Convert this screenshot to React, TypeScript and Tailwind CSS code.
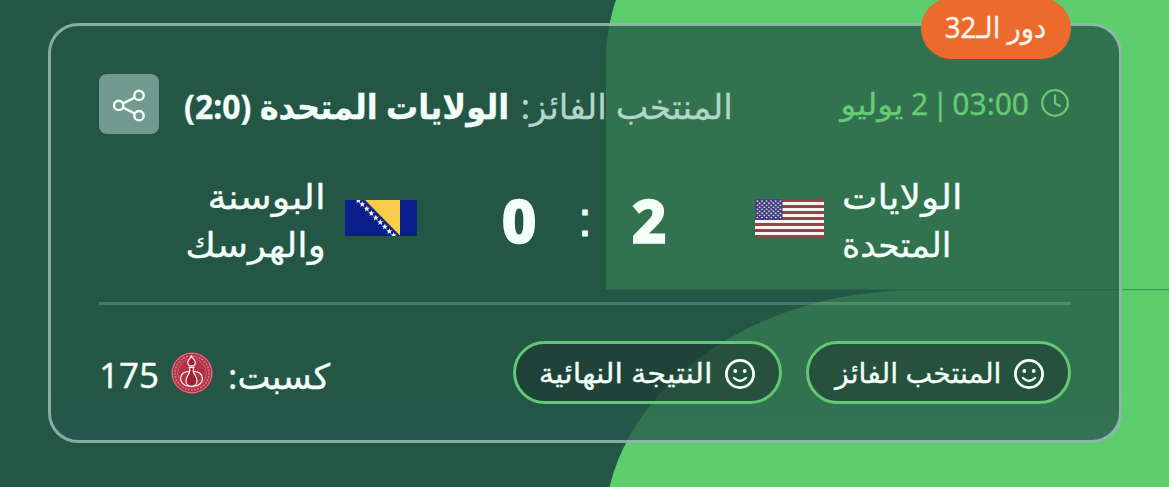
import type { ReactNode } from "react";

function Backdrop() {
  return (
    <svg className="absolute inset-0" width="1169" height="487" viewBox="0 0 1169 487" fill="none">
      <path d="M606 289.5V60A312 240 0 0 1 918 -180H1169V289.5Z" fill="#5ecd6d" />
      <path d="M604.5 530A313 240 0 0 1 917.500 290H1169V530Z" fill="#5ecd6d" />
      <path d="M606 289.7H1169" stroke="#3f9a5c" strokeWidth="1" />
    </svg>
  );
}

function ShareIcon() {
  return (
    <svg width="60" height="60" viewBox="0 0 60 60" fill="none" stroke="#f4fffa" strokeWidth="2.4">
      <circle cx="19.7" cy="31.4" r="4.7" />
      <circle cx="40" cy="21.4" r="4.7" />
      <circle cx="40" cy="41.7" r="4.7" />
      <path d="M24 29.4L35.7 23.6M24 33.5L35.8 39.6" />
    </svg>
  );
}

function ClockIcon() {
  return (
    <svg width="30" height="30" viewBox="0 0 30 30" fill="none" stroke="#67cb74" strokeWidth="2.3" strokeLinecap="round" strokeLinejoin="round">
      <circle cx="15" cy="15" r="12.8" />
      <path d="M15 7.5V15.5L20 18" />
    </svg>
  );
}

function SmileIcon() {
  return (
    <svg className="shrink-0" width="32" height="32" viewBox="0 0 32 32" fill="none" stroke="#f4fffa" strokeWidth="2.8" strokeLinecap="round">
      <circle cx="16" cy="16" r="13.6" />
      <path d="M10 20Q16 25.8 22 20" strokeWidth="2.4" />
      <circle cx="11.3" cy="13" r="1.9" fill="#f4fffa" stroke="none" />
      <circle cx="20.7" cy="13" r="1.9" fill="#f4fffa" stroke="none" />
    </svg>
  );
}

const flagStars = [
  [13.4, 0.5], [17.3, 4.3], [21.8, 8.8], [26.3, 13.3], [30.8, 17.8], [35.3, 22.3], [39.8, 26.8], [44.3, 31.3], [48.7, 35.4],
];

function BosniaFlag() {
  return (
    <svg className="shrink-0" width="72" height="36" viewBox="0 0 72 36">
      <rect width="72" height="36" fill="#0a1f8c" />
      <path d="M19.500 0H55V36Z" fill="#f5cd4b" />
      <path d="M19 0L54.500 36" stroke="#33305f" strokeWidth="1.4" />
      {flagStars.map(([x, y]) => (
        <path
          key={x}
          transform={`translate(${x} ${y}) scale(1.1)`}
          d="M0 -2.9L.75 -.95L2.8 -.9L1.2 .4L1.7 2.4L0 1.25L-1.7 2.4L-1.2 .4L-2.8 -.9L-.75 -.95Z"
          fill="#f2f6ff"
        />
      ))}
    </svg>
  );
}

function UsaFlag() {
  const stars: [number, number][] = [];
  for (let r = 0; r < 9; r++) {
    for (let c = 0; c < (r % 2 ? 5 : 6); c++) {
      stars.push([2.4 + c * 4.6 + (r % 2 ? 2.3 : 0), 2.1 + r * 2.05]);
    }
  }
  return (
    <svg className="shrink-0" width="69" height="39" viewBox="0 0 69 39">
      <rect width="69" height="39" fill="#96404a" />
      {[3, 9, 15, 21, 27, 33].map((y) => (
        <rect key={y} y={y} width="69" height="3" fill="#fbf3f3" />
      ))}
      <rect width="27.5" height="21" fill="#46427f" />
      {stars.map(([x, y]) => (
        <circle key={`${x}-${y}`} cx={x} cy={y} r="0.8" fill="#f1eef9" />
      ))}
    </svg>
  );
}

function Coin() {
  return (
    <svg className="shrink-0" width="42" height="42" viewBox="0 0 42 42" fill="none">
      <circle cx="21" cy="21" r="20.8" fill="#b23346" />
      <circle cx="21" cy="21" r="19.8" stroke="#d98f98" strokeWidth="0.9" />
      <circle cx="21" cy="21" r="17" stroke="#d07884" strokeWidth="1.5" strokeDasharray="2 1.2" />
      <circle cx="21" cy="21" r="14.4" stroke="#cb6d7a" strokeWidth="0.8" />
      <g stroke="#fff1f1" strokeWidth="1.2">
        <path d="M18.500 19.500C6.500 19 7 33.500 17.500 34H23.500C34 33.500 34.500 19 22.500 19.500" fill="#b23346" />
        <path d="M18.700 15.500H22.300V19.500C23.500 23.500 26 25 26 28.800C26 32 23.700 34.300 20.500 34.300C17.300 34.300 15 32 15 28.800C15 25 17.500 23.500 18.700 19.500Z" fill="#a71d33" />
        <path d="M20.500 4.200C21.500 6.700 24.300 7.700 24.300 10.400C24.300 12.600 22.500 13.900 20.500 13.900C18.500 13.900 16.700 12.600 16.700 10.400C16.700 7.700 19.500 6.700 20.500 4.200Z" fill="#a71d33" />
        <path d="M17.500 15.200H23.500" />
      </g>
    </svg>
  );
}

function Prediction({ className, children }: { className: string; children: ReactNode }) {
  return (
    <div className={`flex h-[63px] items-center rounded-full border-3 border-[#62c873] bg-[#1a2f2b]/50 pr-[23px] ${className}`}>
      <div className="pt-0.5"><SmileIcon /></div>
      {children}
    </div>
  );
}

export default function App() {
  return (
    <div
      dir="rtl"
      className="relative h-[487px] w-[1169px] overflow-hidden bg-[#245645] pt-[23px] pr-[47px] font-['Noto_Sans','DejaVu_Sans',sans-serif] text-[#f4fffa] [-webkit-text-stroke:0.3px]"
    >
      <Backdrop />
      <div className="relative h-[420px] w-[1074px] rounded-[30px] border-3 border-[#c7e7dc]/60 bg-linear-to-b from-[#245645]/77 from-88% to-[#265650]/77 px-12 pt-12">
        <div className="absolute -top-7 right-12 flex h-[61px] w-[150px] items-center justify-center rounded-full bg-[#eb6a2c] pb-1 text-[29px] text-[#fff6ea]">
          <span className="scale-x-95 whitespace-nowrap">دور الـ32</span>
        </div>

        {/* Kick-off time, winner and share button */}
        <div className="flex h-[60px] items-center">
          <div className="flex w-[338px] items-center text-[30px] leading-none text-[#67cb74]">
            <div className="mr-px pb-0.5"><ClockIcon /></div>
            <span className="mr-[11px] whitespace-nowrap [word-spacing:-4px]">
              03:00 | 2 <span className="mr-1 inline-block origin-right scale-x-110">يوليو</span>
            </span>
          </div>
          <div className="w-[550px] pt-1 text-[34px] leading-none whitespace-nowrap text-[#b3d6c9]">
            <span className="inline-block origin-right scale-x-[1.015]">المنتخب الفائز:</span>{" "}
            <b className="mr-1.5 inline-block origin-right scale-x-[0.942] text-[#f4fffa]">الولايات المتحدة (2:0)</b>
          </div>
          <button type="button" className="mr-auto size-[60px] rounded-lg bg-[#739a8f]" aria-label="مشاركة">
            <ShareIcon />
          </button>
        </div>

        <div className="mt-[38px] flex h-24 items-center">
          <div className="mr-[109px] flex w-[120px] flex-col items-end text-[34px] leading-[48px]">
            <span className="origin-left scale-x-[1.11]">الولايات</span>
            <span className="origin-left scale-x-[1.02]">المتحدة</span>
          </div>
          <div className="mr-[18px] pb-1"><UsaFlag /></div>
          <div className="mr-[88px] w-9 text-center text-[60px] leading-none font-extrabold [-webkit-text-stroke:1.5px]">2</div>
          <div className="mr-[38px] w-4 text-center font-['Liberation_Sans'] text-[48px] leading-none [-webkit-text-stroke:1px]">:</div>
          <div className="mr-[40px] w-9 text-center text-[60px] leading-none font-extrabold [-webkit-text-stroke:1.5px]">0</div>
          <div className="mr-[84px] pb-1"><BosniaFlag /></div>
          <div className="mr-[19px] flex w-[150px] flex-col items-start text-[34px] leading-[48px]">
            <span className="origin-right scale-x-[1.13]">البوسنة</span>
            <span className="origin-right scale-x-[1.1]">والهرسك</span>
          </div>
        </div>

        <div className="mt-[34px] h-[3px] bg-[#7bb59e]/40" />

        <div className="mt-9 flex items-center">
          <Prediction className="w-[265px]">
            <span className="mr-3 mb-0.5 origin-right scale-x-[1.012] text-[28px] leading-none whitespace-nowrap">المنتخب الفائز</span>
          </Prediction>
          <Prediction className="mr-6 w-[269px]">
            <span className="mr-3 mb-0.5 origin-right scale-x-[1.09] text-[28px] leading-none whitespace-nowrap">النتيجة النهائية</span>
          </Prediction>
          <div className="mr-auto flex items-center text-[35px] leading-none">
            <span className="pt-1.5 whitespace-nowrap">كسبت:</span>
            <span className="mr-[15px]"><Coin /></span>
            <span className="mr-3 pt-1">175</span>
          </div>
        </div>
      </div>
    </div>
  );
}
